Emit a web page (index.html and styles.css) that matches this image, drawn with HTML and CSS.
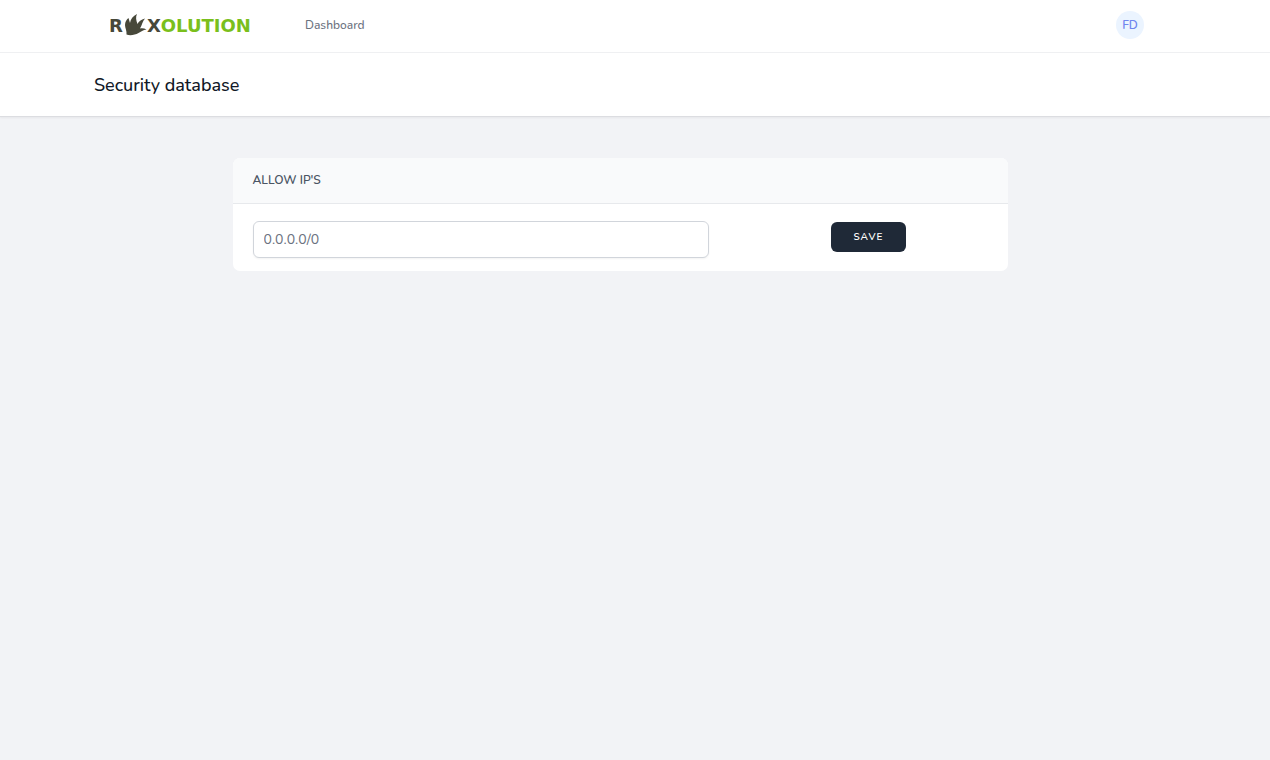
FILE: index.html
```html
<!DOCTYPE html>
<html lang="en">
<head>
<meta charset="utf-8">
<meta name="viewport" content="width=device-width, initial-scale=1">
<title>Security database</title>
<link rel="stylesheet" href="styles.css">
</head>
<body>
<nav class="navbar">
  <div class="container navbar-inner">
    <a class="logo" href="#" aria-label="Rexolution">
      <span class="logo-dark">R</span>
      <svg class="logo-claw" viewBox="0 0 22 22" aria-hidden="true">
        <path d="M1.500 20.500C2 17 0 14 0 11C0 8 1.500 5.500 3.500 4L5 9C5.500 5 8 2 12 0C10.500 3 11 6 12.500 10C13.500 7.500 16 5.500 20 4.500C17.500 7.500 17 11 15 14.500C17.500 14 19.500 14.500 21.500 15.500C18 16 16 17.500 13.500 19C10 21 5 22 1.500 20.500Z"/>
      </svg>
      <span class="logo-dark">X</span><span class="logo-green">OLUTION</span>
    </a>
    <a class="nav-link" href="#">Dashboard</a>
    <button class="avatar" type="button" aria-label="Account menu">FD</button>
  </div>
</nav>
<header class="page-header">
  <div class="container">
    <h1 class="page-title">Security database</h1>
  </div>
</header>
<main class="container main">
  <form class="card">
    <div class="card-header"><label for="ip">ALLOW IP'S</label></div>
    <div class="card-body">
      <input class="ip-input" id="ip" type="text" placeholder="0.0.0.0/0">
      <button class="save" type="button">SAVE</button>
    </div>
  </form>
</main>
</body>
</html>
```
FILE: styles.css
```css
* {
  box-sizing: border-box;
}

body {
  margin: 0;
  min-height: 100vh;
  background: #f2f3f6;
  color: #111827;
  font-family: Nunito, "Noto Sans", sans-serif;
}

button,
input {
  font-family: inherit;
}

.container {
  padding: 0 124px 0 94px;
}

.navbar {
  background: #fff;
  border-bottom: 1px solid #eff0f2;
}

.navbar-inner {
  display: flex;
  align-items: center;
  height: 52px;
  padding-bottom: 2px;
}

.logo {
  display: flex;
  align-items: center;
  width: 144px;
  margin-left: 15px;
  padding-top: 2px;
  font: bold 18px/24px "DejaVu Sans", sans-serif;
  text-decoration: none;
}

.logo-dark {
  color: #47483a;
}

.logo-green {
  color: #7abf1c;
}

.logo-claw {
  flex: none;
  width: 22px;
  height: 22px;
  margin: 0 0 2px 2px;
  fill: #47483a;
}

.nav-link {
  margin-left: 52px;
  color: #6b7280;
  font-size: 12px;
  font-weight: 500;
  text-decoration: none;
}

.avatar {
  width: 28px;
  height: 28px;
  margin-left: auto;
  margin-right: 2px;
  padding: 0;
  border: 0;
  border-radius: 50%;
  background: #ebf4ff;
  color: #7086ee;
  font-size: 12px;
  font-weight: 600;
}

.page-header {
  padding: 20px 0 19px;
  background: #fff;
  border-bottom: 1px solid #dcdde1;
  box-shadow: 0 1px 2px #0000000d;
}

.page-title {
  margin: 0;
  font-size: 18px;
  font-weight: 500;
  line-height: 24px;
}

.main {
  padding-top: 41px;
}

.card {
  max-width: 775px;
  margin: 0 auto;
  overflow: hidden;
  border-radius: 7px;
  background: #fff;
}

.card-header {
  padding: 12px 20px 13px;
  border-bottom: 1px solid #e7e9ec;
  background: #f9fafb;
  color: #4b5563;
  font-size: 12px;
  font-weight: 600;
  line-height: 20px;
}

.card-body {
  display: grid;
  grid-template-columns: 23fr 12fr;
  column-gap: 40px;
  align-items: start;
  padding: 17px 20px 13px;
}

.ip-input {
  width: 100%;
  height: 37px;
  padding: 0 10px;
  border: 1px solid #d1d5db;
  border-radius: 6px;
  box-shadow: 0 1px 2px #0000000d;
  background: #fff;
  color: #374151;
  font-size: 14px;
}

.ip-input::placeholder {
  color: #6b7280;
  opacity: 1;
}

.save {
  justify-self: center;
  width: 75px;
  height: 30px;
  margin-top: 1px;
  padding: 0;
  border: 0;
  border-radius: 6px;
  background: #1f2937;
  color: #fff;
  font-size: 10px;
  font-weight: 600;
  letter-spacing: 1px;
}
```
